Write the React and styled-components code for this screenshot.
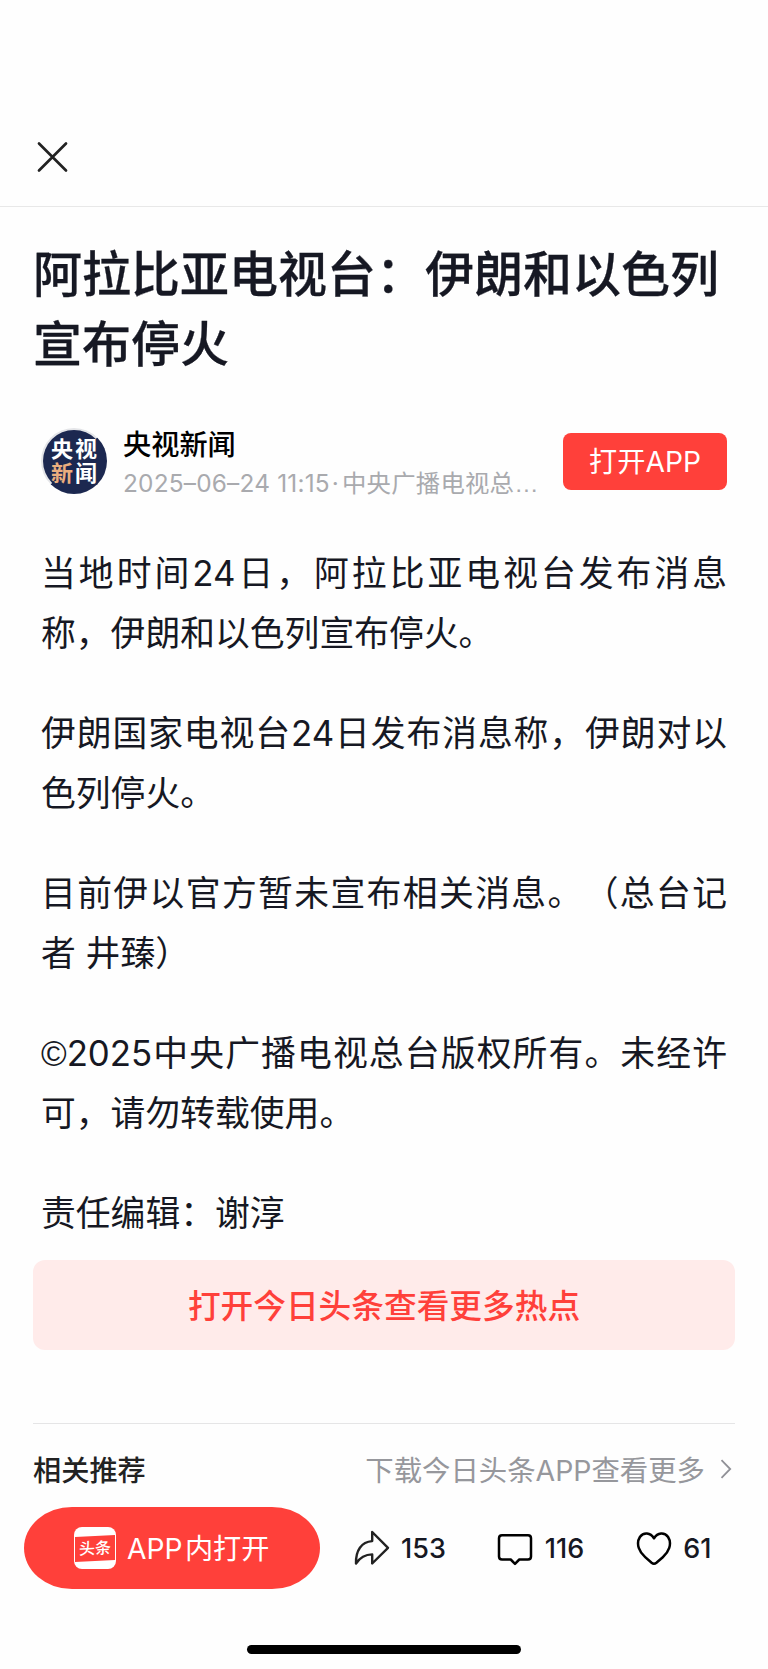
import React from "react";
import styled, { createGlobalStyle } from "styled-components";

const GlobalStyle = createGlobalStyle`
  * {
    box-sizing: border-box;
  }

  body {
    margin: 0;
    background: #fefefe;
    color: #161823;
    font-family: Inter, "Noto Sans CJK SC", sans-serif;
    text-spacing-trim: space-all;
    -webkit-font-smoothing: antialiased;
  }

  button {
    border: 0;
    padding: 0;
    background: none;
    color: inherit;
    font: inherit;
    cursor: pointer;
  }
`;

const Page = styled.div`
  display: flex;
  flex-direction: column;
  width: 768px;
  height: 1669px;
  overflow: hidden;
`;

const TopBar = styled.header`
  display: flex;
  align-items: flex-end;
  height: 207px;
  padding: 0 36px 33px;
  border-bottom: 1px solid #e8e8e8;
`;

const CloseButton = styled.button`
  display: flex;
`;

const Article = styled.article`
  display: flex;
  flex-direction: column;
  padding: 33px 33px 0;
`;

const Title = styled.h1`
  margin: 0;
  font-size: 49px;
  font-weight: 500;
  line-height: 70px;
  -webkit-text-stroke: 0.3px #161823;
`;

// Avatar, source name and the open button
const AuthorRow = styled.div`
  display: flex;
  align-items: center;
  height: 66px;
  margin-top: 48px;
  padding: 0 8px 0 8px;
`;

const Avatar = styled.div`
  display: grid;
  grid-template-columns: 24px 24px;
  place-content: center;
  width: 66px;
  height: 66px;
  border: 2px solid #e4e5e8;
  border-right-color: #1c2850;
  border-bottom-color: #1c2850;
  border-radius: 50%;
  background: #1c2850;
  color: #fff;
  font-size: 22px;
  font-weight: 700;
  line-height: 24px;
  text-align: center;
`;

const AvatarAccent = styled.span`
  color: #eaae7e;
`;

const AuthorInfo = styled.div`
  display: flex;
  flex-direction: column;
  flex: 1;
  min-width: 0;
  margin-left: 16px;
  padding-top: 6px;
`;

const AuthorName = styled.strong`
  color: #000;
  font-size: 28.2px;
  font-weight: 500;
  line-height: 38px;
`;

const Meta = styled.span`
  color: #a9aaae;
  font-size: 24.4px;
  line-height: 38px;
  letter-spacing: 0.2px;
  white-space: nowrap;
`;

const MetaDot = styled.span`
  margin: 0 3px 0 2px;
`;

const OpenButton = styled.button`
  flex-shrink: 0;
  width: 164px;
  height: 57px;
  padding-bottom: 3px;
  border-radius: 8px;
  background: #ff403a;
  color: #fff;
  font-size: 28.2px;
`;

const Content = styled.div`
  display: flex;
  flex-direction: column;
  gap: 40px;
  margin-top: 49px;
  padding: 0 8px;
`;

const Paragraph = styled.p`
  margin: 0;
  font-size: 34.8px;
  line-height: 60px;
  text-align: justify;
`;

// Glyphs that are too heavy or too narrow in Inter
const PlainGlyph = styled.span`
  font-family: "Liberation Sans", sans-serif;
  line-height: 1;
`;

const MoreButton = styled.button`
  height: 90px;
  margin-top: 17px;
  padding-bottom: 3px;
  border-radius: 12px;
  background: #ffebea;
  color: #ff403a;
  font-size: 32.7px;
  font-weight: 500;
`;

const Related = styled.section`
  display: flex;
  align-items: center;
  justify-content: space-between;
  height: 84px;
  margin: 73px 33px 0;
  padding-top: 6px;
  border-top: 1px solid #e5e5e6;
`;

const RelatedTitle = styled.h2`
  margin: 0;
  color: #222;
  font-size: 28.2px;
  font-weight: 500;
`;

const RelatedLink = styled.span`
  display: flex;
  align-items: center;
  gap: 15px;
  padding-right: 3px;
  color: #96979c;
  font-size: 28.4px;
`;

const BottomBar = styled.footer`
  display: flex;
  align-items: center;
  height: 82px;
  padding-left: 24px;
`;

const AppButton = styled.button`
  display: flex;
  align-items: center;
  width: 296px;
  height: 82px;
  padding-left: 50px;
  border-radius: 48px / 41px;
  background: #ff403a;
  color: #fff;
  font-size: 28.2px;
`;

const AppLogo = styled.span`
  display: flex;
  align-items: center;
  width: 42px;
  height: 42px;
  margin-right: 11px;
  border-radius: 8px;
  background: #fff;
`;

const AppLogoBand = styled.span`
  flex: 1;
  height: 25px;
  margin: 0 1px;
  background: #ff403a;
  font-size: 16px;
  font-weight: 500;
  line-height: 24px;
  text-align: center;
  transform: skewY(-3deg);
`;

const AppLabel = styled.span`
  padding-bottom: 3px;
  word-spacing: -5.5px;
`;

const Action = styled.button`
  display: flex;
  align-items: center;
  gap: ${(props) => props.$gap}px;
  margin-left: ${(props) => props.$offset}px;
  font-size: 27px;
  font-weight: 500;

  svg {
    display: block;
    flex-shrink: 0;
  }
`;

const HomeIndicator = styled.div`
  align-self: center;
  width: 274px;
  height: 9px;
  margin-top: 56px;
  border-radius: 5px;
  background: #000;
`;

const paragraphs = [
  { text: "当地时间24日，阿拉比亚电视台发布消息称，伊朗和以色列宣布停火。" },
  { text: "伊朗国家电视台24日发布消息称，伊朗对以色列停火。" },
  { text: "目前伊以官方暂未宣布相关消息。（总台记者 井臻）" },
  {
    sign: "©",
    text: "2025中央广播电视总台版权所有。未经许可，请勿转载使用。",
  },
  { text: "责任编辑：谢淳" },
];

const CloseIcon = () => (
  <svg width="33" height="32" viewBox="0 0 33 32" fill="none">
    <path
      d="M3 2.5 30 29.5M30 2.5 3 29.5"
      stroke="#222"
      strokeWidth="2.7"
      strokeLinecap="round"
    />
  </svg>
);

const ShareIcon = () => (
  <svg width="36" height="36" viewBox="0 0 36 36" fill="none">
    <path
      d="M18.2 2 34 17.8 18.2 33.5V24.4C10.5 24.5 5.5 28.2 2 33.5 1.6 20.5 7.4 11.8 18.2 11.1Z"
      stroke="#222"
      strokeWidth="2.4"
      strokeLinejoin="round"
    />
  </svg>
);

const CommentIcon = () => (
  <svg width="36" height="36" viewBox="0 0 36 36" fill="none">
    <path
      d="M5 5.2H31Q34 5.2 34 8.2V26.5Q34 29.5 31 29.5H22.3L18 33.8 13.7 29.5H5Q2 29.5 2 26.5V8.2Q2 5.2 5 5.2Z"
      stroke="#000"
      strokeWidth="2.5"
      strokeLinejoin="round"
    />
  </svg>
);

const HeartIcon = () => (
  <svg width="36" height="36" viewBox="0 0 36 36" fill="none">
    <path
      d="M18 8.3C14.5 2.3 7.4 1.8 3.9 7 -.5 14 3.5 22 9.2 27.2L15.6 32.8Q18 34.8 20.4 32.8L26.8 27.2C32.5 22 36.5 14 32.1 7 28.6 1.8 21.5 2.3 18 8.3Z"
      stroke="#000"
      strokeWidth="2.5"
      strokeLinejoin="round"
    />
  </svg>
);

const ChevronIcon = () => (
  <svg width="12" height="20" viewBox="0 0 12 20" fill="none">
    <path d="M1.5 1.2 10.2 10 1.5 18.8" stroke="#909197" strokeWidth="1.8" />
  </svg>
);

export default function App() {
  return (
    <>
      <GlobalStyle />
      <Page lang="zh-CN">
        <TopBar>
          <CloseButton>
            <CloseIcon />
          </CloseButton>
        </TopBar>

        <Article>
          <Title>阿拉比亚电视台：伊朗和以色列宣布停火</Title>
          <AuthorRow>
            <Avatar>
              <span>央</span>
              <span>视</span>
              <AvatarAccent>新</AvatarAccent>
              <span>闻</span>
            </Avatar>
            <AuthorInfo>
              <AuthorName>央视新闻</AuthorName>
              <Meta>
                2025–06–24 11:15<MetaDot>·</MetaDot>中央广播电视总
                <PlainGlyph>…</PlainGlyph>
              </Meta>
            </AuthorInfo>
            <OpenButton>打开APP</OpenButton>
          </AuthorRow>

          <Content>
            {paragraphs.map(({ sign, text }) => (
              <Paragraph key={text}>
                {sign && <PlainGlyph>{sign}</PlainGlyph>}
                {text}
              </Paragraph>
            ))}
          </Content>

          <MoreButton>打开今日头条查看更多热点</MoreButton>
        </Article>

        <Related>
          <RelatedTitle>相关推荐</RelatedTitle>
          <RelatedLink>
            下载今日头条APP查看更多
            <ChevronIcon />
          </RelatedLink>
        </Related>

        <BottomBar>
          <AppButton>
            <AppLogo>
              <AppLogoBand>头条</AppLogoBand>
            </AppLogo>
            <AppLabel>APP 内打开</AppLabel>
          </AppButton>
          <Action $offset={34} $gap={11}>
            <ShareIcon />
            153
          </Action>
          <Action $offset={51} $gap={12}>
            <CommentIcon />
            116
          </Action>
          <Action $offset={52} $gap={11}>
            <HeartIcon />
            61
          </Action>
        </BottomBar>

        <HomeIndicator />
      </Page>
    </>
  );
}
